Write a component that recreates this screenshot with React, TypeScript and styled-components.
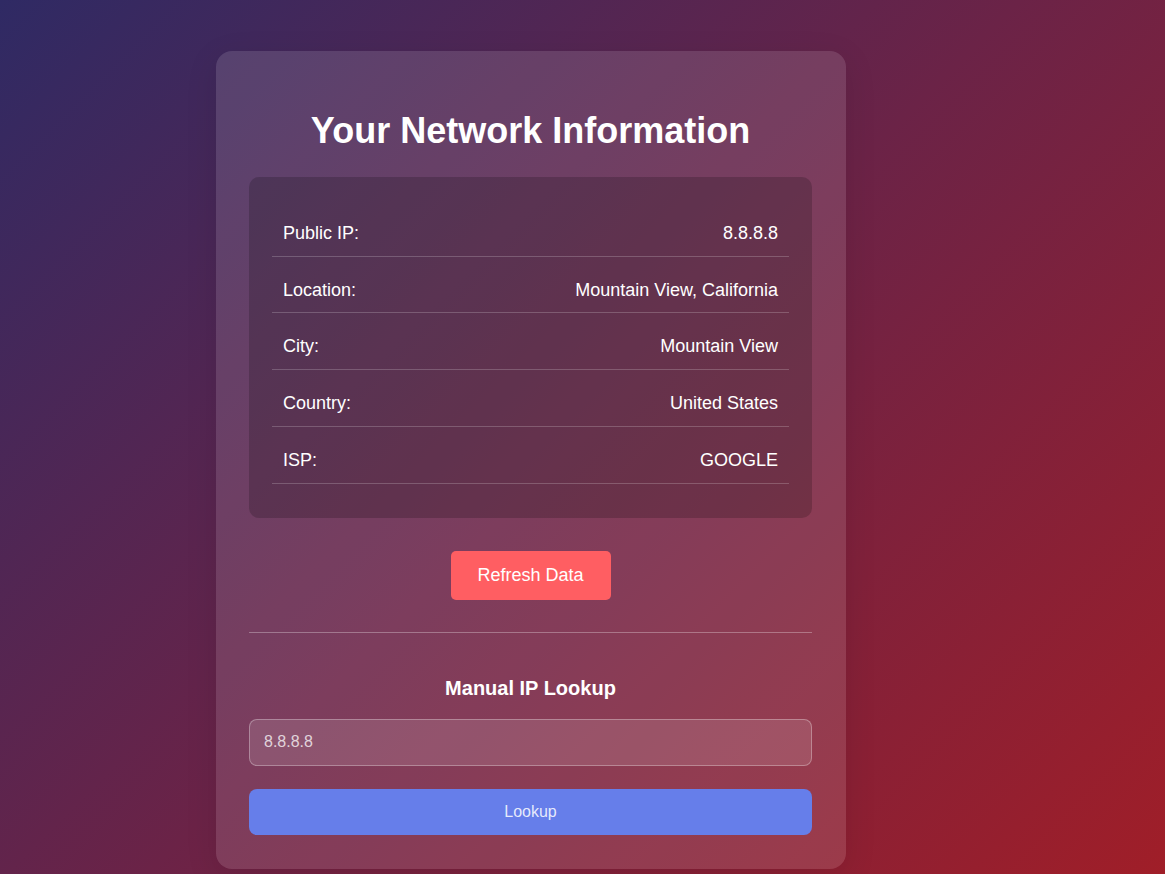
import React from "react";
import styled, { createGlobalStyle } from "styled-components";

const Global = createGlobalStyle`
  html, body { margin: 0; padding: 0; }
  body {
    min-height: 100vh;
    background: linear-gradient(135deg, #2f2a64 0%, #6b2347 50%, #a01e28 100%);
    background-attachment: fixed;
    font-family: "Liberation Sans", Arial, sans-serif;
    color: #fff;
  }
`;

const Page = styled.div`
  padding: 51px 0 6px 216px;
`;

const Card = styled.div`
  width: 563px;
  padding: 33px 34px 34px 33px;
  background: rgba(255, 255, 255, 0.12);
  border-radius: 16px;
  box-shadow: 0 8px 32px rgba(0, 0, 0, 0.1);
  display: flex;
  flex-direction: column;
`;

const Title = styled.h1`
  margin: 26px 0 26px;
  text-align: center;
  font-size: 36px;
  line-height: 41px;
  font-weight: 700;
`;

const InfoBox = styled.div`
  background: rgba(0, 0, 0, 0.18);
  border-radius: 10px;
  padding: 23px;
`;

const Row = styled.div`
  display: flex;
  justify-content: space-between;
  align-items: center;
  margin: 11px 0;
  padding: 12px 11px;
  border-bottom: 1px solid rgba(255, 255, 255, 0.2);
  font-size: 18px;
  line-height: 20.7px;
`;

const Label = styled.span`
  font-weight: 500;
`;

const Value = styled.span``;

const ButtonRow = styled.div`
  display: flex;
  justify-content: center;
  margin-top: 33px;
`;

const RefreshButton = styled.button`
  width: 160px;
  height: 49px;
  background: #ff5e62;
  color: #fff;
  border: none;
  border-radius: 5px;
  font-family: "Liberation Sans", Arial, sans-serif;
  font-size: 18px;
`;

const Divider = styled.hr`
  width: 100%;
  margin: 32px 0 0;
  border: none;
  border-top: 1px solid rgba(255, 255, 255, 0.3);
`;

const SubTitle = styled.h3`
  margin: 44px 0 19px;
  text-align: center;
  font-size: 20px;
  line-height: 23px;
  font-weight: 700;
`;

const Input = styled.input`
  box-sizing: border-box;
  width: 100%;
  height: 47px;
  padding: 0 14px;
  background: rgba(255, 255, 255, 0.12);
  border: 1px solid rgba(255, 255, 255, 0.3);
  border-radius: 8px;
  color: rgba(255, 255, 255, 0.75);
  font-family: "Liberation Sans", Arial, sans-serif;
  font-size: 16px;
  outline: none;
`;

const LookupButton = styled.button`
  margin-top: 23px;
  width: 100%;
  height: 46px;
  background: #667eea;
  color: rgba(255, 255, 255, 0.85);
  border: none;
  border-radius: 8px;
  font-family: "Liberation Sans", Arial, sans-serif;
  font-size: 16px;
`;

const rows: [string, string][] = [
  ["Public IP:", "8.8.8.8"],
  ["Location:", "Mountain View, California"],
  ["City:", "Mountain View"],
  ["Country:", "United States"],
  ["ISP:", "GOOGLE"],
];

export default function App() {
  return (
    <>
      <Global />
      <Page>
        <Card>
          <Title>Your Network Information</Title>
          <InfoBox>
            {rows.map(([l, v]) => (
              <Row key={l}>
                <Label>{l}</Label>
                <Value>{v}</Value>
              </Row>
            ))}
          </InfoBox>
          <ButtonRow>
            <RefreshButton>Refresh Data</RefreshButton>
          </ButtonRow>
          <Divider />
          <SubTitle>Manual IP Lookup</SubTitle>
          <Input defaultValue="8.8.8.8" />
          <LookupButton>Lookup</LookupButton>
        </Card>
      </Page>
    </>
  );
}
